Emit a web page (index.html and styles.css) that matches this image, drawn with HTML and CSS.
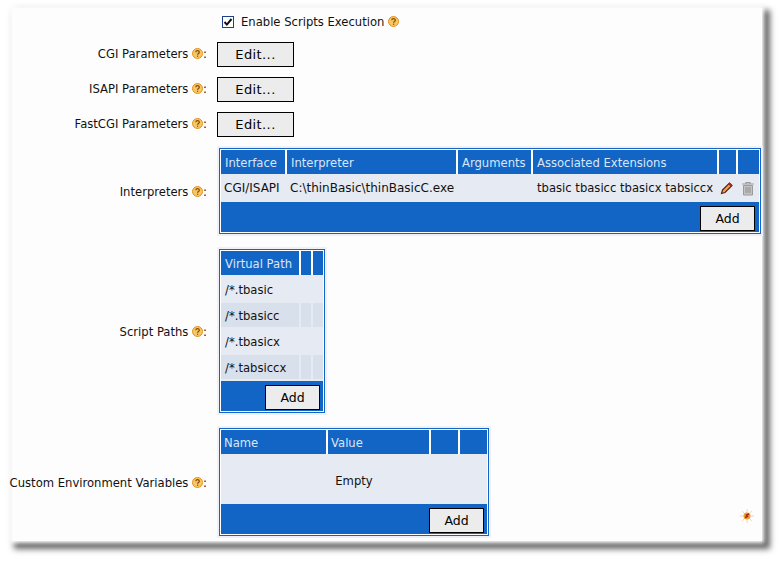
FILE: index.html
```html
<!DOCTYPE html>
<html>
<head>
  <meta charset="UTF-8">
  <title>CGI Settings</title>
  <link rel="stylesheet" href="styles.css">
</head>
<body>
  <svg class="defs" width="0" height="0">
    <symbol id="help" viewBox="0 0 11 11">
      <circle cx="5.5" cy="5.5" r="5" fill="#f6c766" stroke="#e0931c"/>
      <path d="M3.8 4.2c0-2.1 3.5-2.1 3.5 0 0 1.3-1.7 1.2-1.7 2.5" fill="none" stroke="#8a4a08" stroke-width="1.2"/>
      <rect x="5" y="7.6" width="1.2" height="1.2" fill="#8a4a08"/>
    </symbol>
  </svg>

  <div class="sheet">
    <div class="form">
      <div></div>
      <div class="enable">
        <span class="check">
          <svg width="10" height="10" viewBox="0 0 10 10"><path d="M1.5 5l2.4 2.6L8.5 2" fill="none" stroke="#111" stroke-width="2"/></svg>
        </span>
        Enable Scripts Execution
        <svg class="help" width="11" height="11"><use href="#help"/></svg>
      </div>

      <div class="label raised">CGI Parameters <svg class="help" width="11" height="11"><use href="#help"/></svg>:</div>
      <div><button class="edit">Edit...</button></div>

      <div class="label raised">ISAPI Parameters <svg class="help" width="11" height="11"><use href="#help"/></svg>:</div>
      <div><button class="edit">Edit...</button></div>

      <div class="label raised">FastCGI Parameters <svg class="help" width="11" height="11"><use href="#help"/></svg>:</div>
      <div><button class="edit">Edit...</button></div>

      <div class="label">Interpreters <svg class="help" width="11" height="11"><use href="#help"/></svg>:</div>
      <div class="frame first">
        <div class="frame-line">
          <table class="grid wide">
            <colgroup><col width="66"><col width="171"><col width="75"><col width="186"><col width="19"><col width="21"></colgroup>
            <thead>
              <tr><th>Interface</th><th>Interpreter</th><th>Arguments</th><th>Associated Extensions</th><th></th><th></th></tr>
            </thead>
            <tbody>
              <tr>
                <td class="tight">CGI/ISAPI</td>
                <td class="tight">C:\thinBasic\thinBasicC.exe</td>
                <td></td>
                <td>tbasic tbasicc tbasicx tabsiccx</td>
                <td class="icon pencil">
                  <svg width="14" height="14" viewBox="0 0 14 14">
                    <path d="M2.5 9L9.5 2l2.5 2.5-7 7-3.5 1z" fill="#f0a63c" stroke="#5c1f10" stroke-width="1.2"/>
                    <path d="M9 2.5L11.500 5" stroke="#b3261e" stroke-width="2"/>
                  </svg>
                </td>
                <td class="icon trash">
                  <svg width="14" height="15" viewBox="0 0 14 15">
                    <path d="M1 3h12M5 3V1.500h4V3" fill="none" stroke="#9a9a9a" stroke-width="1.200"/>
                    <path d="M2.500 4.500h9V14h-9z" fill="#c4c4c4" stroke="#9a9a9a"/>
                    <path d="M5 6v6M7 6v6M9 6v6" stroke="#8e8e8e"/>
                  </svg>
                </td>
              </tr>
            </tbody>
            <tfoot>
              <tr><td colspan="6"><button class="add">Add</button></td></tr>
            </tfoot>
          </table>
        </div>
      </div>

      <div class="label">Script Paths <svg class="help" width="11" height="11"><use href="#help"/></svg>:</div>
      <div class="frame">
        <div class="frame-line">
          <table class="grid narrow">
            <colgroup><col width="80"><col width="12"><col width="10"></colgroup>
            <thead>
              <tr><th>Virtual Path</th><th></th><th></th></tr>
            </thead>
            <tbody class="paths">
              <tr><td>/*.tbasic</td><td></td><td></td></tr>
              <tr><td>/*.tbasicc</td><td></td><td></td></tr>
              <tr><td>/*.tbasicx</td><td></td><td></td></tr>
              <tr><td>/*.tabsiccx</td><td></td><td></td></tr>
            </tbody>
            <tfoot>
              <tr><td colspan="3"><button class="add">Add</button></td></tr>
            </tfoot>
          </table>
        </div>
      </div>

      <div class="label">Custom Environment Variables <svg class="help" width="11" height="11"><use href="#help"/></svg>:</div>
      <div class="frame">
        <div class="frame-line">
          <table class="grid medium">
            <colgroup><col width="107"><col width="103"><col width="29"><col width="27"></colgroup>
            <thead>
              <tr><th class="tight">Name</th><th class="tight">Value</th><th></th><th></th></tr>
            </thead>
            <tbody>
              <tr><td colspan="4" class="empty">Empty</td></tr>
            </tbody>
            <tfoot>
              <tr><td colspan="4"><button class="add">Add</button></td></tr>
            </tfoot>
          </table>
        </div>
      </div>
    </div>

    <svg class="burst" width="16" height="16" viewBox="0 0 16 16">
      <path d="M8 1v14M1 8h14M3 3l10 10M13 3L3 13" stroke="#e8d8c8" stroke-width="1"/>
      <circle cx="8" cy="8" r="3.500" fill="#f0a030"/>
      <path d="M6 9.500L8.500 8.500 7.500 7 10 6" fill="none" stroke="#a02010" stroke-width="1.500"/>
    </svg>
  </div>
</body>
</html>
```

FILE: styles.css
```css
html, body {
  margin: 0;
  background: #fff;
}
body {
  width: 780px;
  height: 561px;
  overflow: hidden;
  font-family: "DejaVu Sans", sans-serif;
  font-size: 11.6px;
  color: #111;
}
.defs {
  display: block;
  height: 0;
}
.sheet {
  position: relative;
  margin: 8px 0 0 12px;
  width: 750px;
  height: 531px;
  padding-top: 2px;
  background: #fdfdfd;
  box-shadow: 0 0 4px 2px #fff, 5px 5px 6px 3px #666;
}
.form {
  display: grid;
  grid-template-columns: 195px auto;
  column-gap: 10px;
  row-gap: 10px;
  align-items: center;
  justify-items: start;
}
.label {
  justify-self: end;
  white-space: nowrap;
}
.label.raised {
  padding-bottom: 2px;
}
.help {
  vertical-align: -1px;
}
.enable {
  display: flex;
  align-items: center;
  box-sizing: border-box;
  height: 22px;
  padding-top: 1px;
  margin-left: 5px;
  gap: 4px;
  white-space: nowrap;
}
.check {
  display: flex;
  align-items: center;
  justify-content: center;
  box-sizing: border-box;
  width: 12px;
  height: 12px;
  margin-right: 3px;
  background: #fff;
  border: 1px solid #1f3f86;
}
button {
  font-family: "DejaVu Sans", sans-serif;
  font-size: 12.5px;
  color: #000;
  background: #ececec;
  border: 1px solid #000;
  padding: 0;
  height: 25px;
  display: block;
}
.edit {
  width: 77px;
  font-size: 13px;
  letter-spacing: 0.4px;
}
.add {
  width: 55px;
  margin-left: auto;
}
.frame {
  padding: 2px;
  background: #eef1f7;
  margin-bottom: 1px;
}
.frame.first {
  margin-top: -1px;
}
.frame-line {
  border: 1px solid #1265c4;
  padding: 1px;
  background: #fff;
}
.grid {
  table-layout: fixed;
  border-collapse: separate;
  border-spacing: 0;
  background: #e6eaf3;
}
.wide { width: 538px; }
.narrow { width: 102px; }
.medium { width: 266px; }
.grid th {
  height: 24px;
  padding: 1px 0 0 4px;
  box-sizing: border-box;
  background: #1265c4;
  color: #dbe6f6;
  font-weight: normal;
  text-align: left;
  border-right: 2px solid #fff;
  white-space: nowrap;
  overflow: hidden;
}
.grid th:last-child {
  border-right: 0;
}
.grid th.tight {
  padding-left: 3px;
}
.grid tbody td {
  height: 28px;
  padding: 0 0 0 4px;
  box-sizing: border-box;
  white-space: nowrap;
}
.grid tbody td.tight {
  padding-left: 3px;
  font-size: 12px;
}
.grid tbody td.icon {
  padding: 0;
  text-align: center;
  line-height: 0;
}
.grid tbody td.pencil {
  padding-right: 4px;
}
.grid tbody td.trash {
  padding-right: 2px;
}
.paths td {
  border-bottom: 2px solid #e6eaf3;
  height: 26px !important;
  padding-top: 1px !important;
}
.paths tr:first-child td {
  border-top: 2px solid #e6eaf3;
  height: 28px !important;
}
.paths tr:nth-child(even) td {
  background: #d8e0eb;
  background-clip: padding-box;
  border-right: 2px solid #e6eaf3;
}
.paths tr:nth-child(even) td:last-child {
  border-right: 0;
}
.grid tbody td.empty {
  height: 50px;
  padding: 3px 0 0 0;
  text-align: center;
}
.grid tfoot td {
  height: 30px;
  padding: 4px 4px 1px 4px;
  box-sizing: border-box;
  background: #1265c4;
}
.narrow tfoot td, .medium tfoot td {
  padding-right: 3px;
}
.burst {
  position: absolute;
  left: 727px;
  top: 500px;
}
```
